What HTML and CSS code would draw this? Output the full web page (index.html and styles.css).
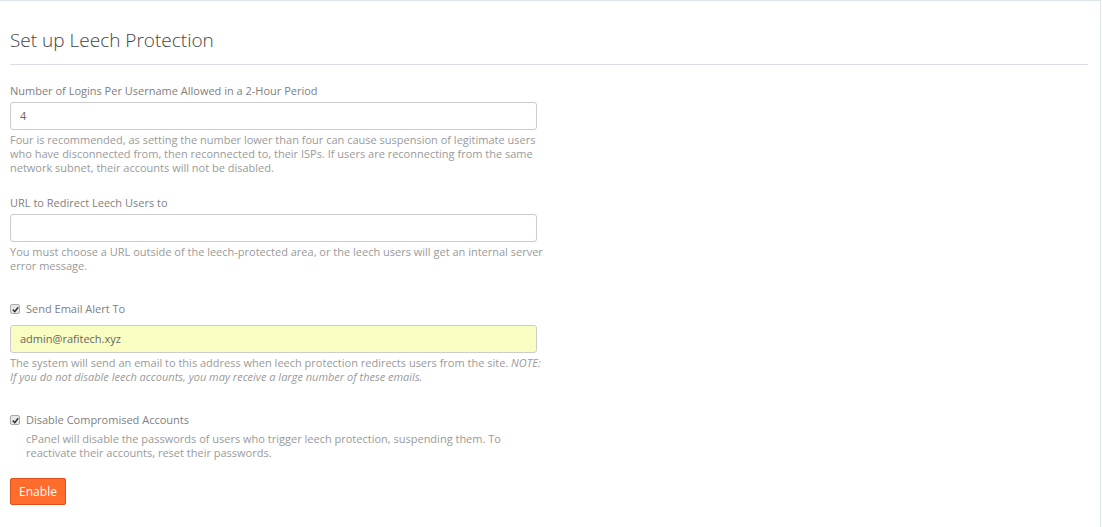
FILE: index.html
```html
<!DOCTYPE html>
<html>
<head>
<meta charset="utf-8">
<link rel="stylesheet" href="styles.css">
</head>
<body>
<div class="panel">
  <h1 class="title">Set up Leech Protection</h1>
  <hr class="rule">
  <div class="group g1">
    <label class="label">Number of Logins Per Username Allowed in a 2-Hour Period</label>
    <div class="input">4</div>
    <p class="help">Four is recommended, as setting the number lower than four can cause suspension of legitimate users who have disconnected from, then reconnected to, their ISPs. If users are reconnecting from the same network subnet, their accounts will not be disabled.</p>
  </div>
  <div class="group g2">
    <label class="label">URL to Redirect Leech Users to</label>
    <div class="input"></div>
    <p class="help">You must choose a URL outside of the leech-protected area, or the leech users will get an internal server error message.</p>
  </div>
  <div class="group g3">
    <div class="check-row"><span class="box"><svg width="7" height="7" viewBox="0 0 7 7"><path d="M0.8 3.6 L2.8 5.6 L6.2 1.2" fill="none" stroke="#333" stroke-width="1.5"/></svg></span><span class="label">Send Email Alert To</span></div>
    <div class="input filled">admin@rafitech.xyz</div>
    <p class="help">The system will send an email to this address when leech protection redirects users from the site. <em>NOTE:<br>If you do not disable leech accounts, you may receive a large number of these emails.</em></p>
  </div>
  <div class="group g4">
    <div class="check-row"><span class="box"><svg width="7" height="7" viewBox="0 0 7 7"><path d="M0.8 3.6 L2.8 5.6 L6.2 1.2" fill="none" stroke="#333" stroke-width="1.5"/></svg></span><span class="label">Disable Compromised Accounts</span></div>
    <p class="help indent">cPanel will disable the passwords of users who trigger leech protection, suspending them. To reactivate their accounts, reset their passwords.</p>
  </div>
  <button class="btn">Enable</button>
</div>
</body>
</html>
```
FILE: styles.css
```css
html, body {
  margin: 0;
  padding: 0;
  background: #fff;
}
body {
  font-family: "Open Sans", "Liberation Sans", sans-serif;
  font-size: 11px;
  color: #777;
  width: 1102px;
  height: 527px;
  overflow: hidden;
}
.panel {
  box-sizing: border-box;
  width: 1101px;
  height: 527px;
  border-top: 1px solid #dde3e6;
  border-right: 1px solid #dde3e6;
  padding: 0 12px 0 10px;
}
.title {
  margin: 0;
  padding-top: 27px;
  font-size: 19px;
  font-weight: 300;
  line-height: 24px;
  color: #444;
}
.rule {
  border: 0;
  border-top: 1px solid #d8dee2;
  margin: 12px 0 0 0;
  height: 0;
}
.group {
  width: 527px;
}
.label {
  display: block;
  color: #808080;
  line-height: 16px;
}
.g1 { margin-top: 18px; }
.g2 { margin-top: 20px; }
.g3 { margin-top: 28px; }
.g4 { margin-top: 28px; }
.input {
  box-sizing: border-box;
  margin-top: 3px;
  height: 28px;
  border: 1px solid #ccc;
  border-radius: 3px;
  padding: 0 9px;
  line-height: 26px;
  color: #666;
}
.input.filled {
  background: #fafdc2;
  margin-top: 8px;
}
.help {
  width: 546px;
  margin: 3px 0 0 0;
  line-height: 14px;
  color: #9a9a9a;
}
.help em { font-style: italic; }
.help.indent {
  width: 500px;
  margin: 4px 0 0 16px;
}
.check-row {
  display: flex;
  align-items: center;
  gap: 6px;
}
.check-row .label { display: inline; }
.box {
  box-sizing: border-box;
  width: 10px;
  height: 10px;
  border: 1px solid #aaa;
  border-radius: 2px;
  background: #e8e8e8;
  display: flex;
  align-items: center;
  justify-content: center;
}
.btn {
  display: block;
  margin-top: 18px;
  box-sizing: border-box;
  height: 27px;
  width: 56px;
  padding: 0;
  background: #ff6c2c;
  border: 1px solid #e0501b;
  border-radius: 2px;
  color: #fff;
  font-family: "Open Sans", "Liberation Sans", sans-serif;
  font-size: 12px;
}
```
